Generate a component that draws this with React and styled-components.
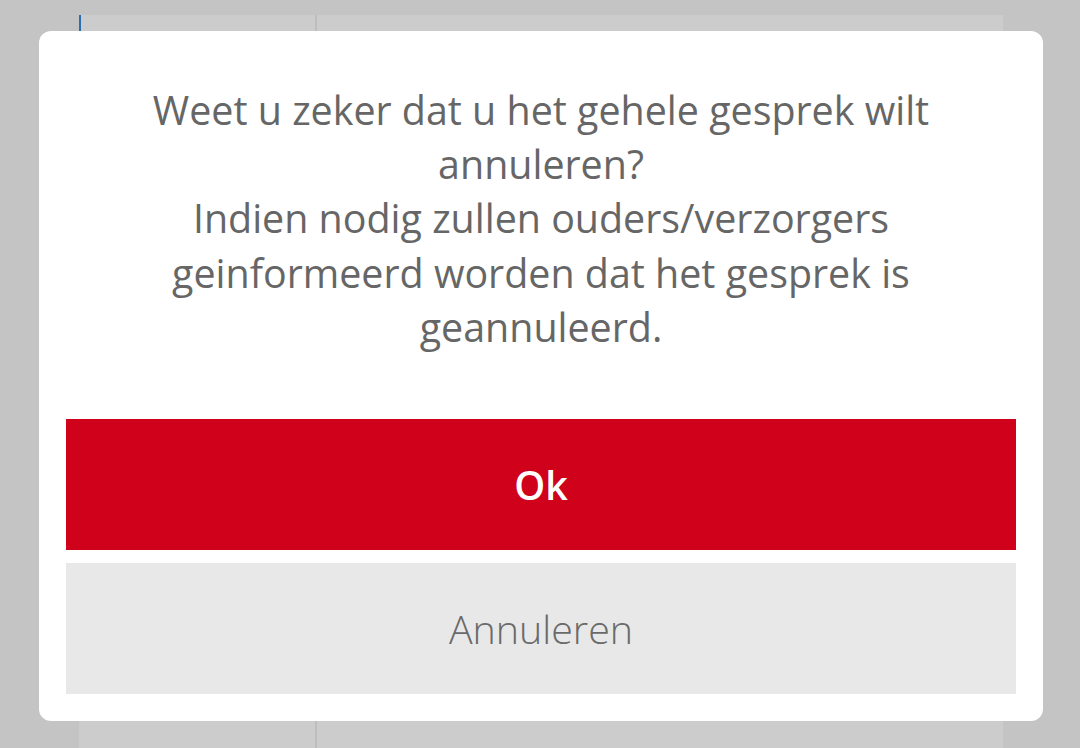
import styled, { createGlobalStyle } from 'styled-components'

const Global = createGlobalStyle`
    html, body {
        margin: 0;
        padding: 0;
        background: #c4c4c4;
        font-family: "Open Sans", "Liberation Sans", sans-serif;
    }
`

const Screen = styled.div`
    position: relative;
    width: 1080px;
    height: 748px;
    overflow: hidden;
    background: #c4c4c4;
`

const Page = styled.div`
    position: relative;
    margin: 15px 0 0 79px;
    width: 924px;
    height: 733px;
    background: #cccccc;
    display: flex;
`

const Accent = styled.div`
    position: absolute;
    left: 0;
    top: 0;
    width: 2px;
    height: 40px;
    background: #2a6db0;
`

const Sidebar = styled.div`
    width: 236px;
    border-right: 2px solid #bdbdbd;
`

const Overlay = styled.div`
    position: absolute;
    inset: 0;
    display: flex;
    align-items: flex-start;
    padding: 31px 0 0 39px;
`

const Modal = styled.div`
    width: 1004px;
    height: 690px;
    box-sizing: border-box;
    background: #fff;
    border-radius: 12px;
    padding: 52px 27px 27px;
    display: flex;
    flex-direction: column;
`

const Message = styled.p`
    margin: 0 0 65px;
    font-size: 39.4px;
    line-height: 54.2px;
    color: #666;
    text-align: center;
    padding: 0 10px;
`

const Button = styled.button`
    display: block;
    width: 100%;
    height: 131px;
    flex: none;
    border: 0;
    padding: 0;
    font-family: "Open Sans", "Liberation Sans", sans-serif;
    font-size: 39.4px;
    background: ${props => props.primary ? '#d0021b' : '#e8e8e8'};
    color: ${props => props.primary ? '#fff' : '#6a6a6a'};
    font-weight: ${props => props.primary ? 600 : 300};
    & + & {
        margin-top: 13px;
    }
`

export default function App() {
    return (
        <Screen>
            <Global />
            <Page>
                <Accent />
                <Sidebar />
            </Page>
            <Overlay>
                <Modal>
                    <Message>
                        Weet u zeker dat u het gehele gesprek wilt annuleren?<br />
                        Indien nodig zullen ouders/verzorgers geinformeerd worden dat het gesprek is geannuleerd.
                    </Message>
                    <Button primary>Ok</Button>
                    <Button>Annuleren</Button>
                </Modal>
            </Overlay>
        </Screen>
    )
}
